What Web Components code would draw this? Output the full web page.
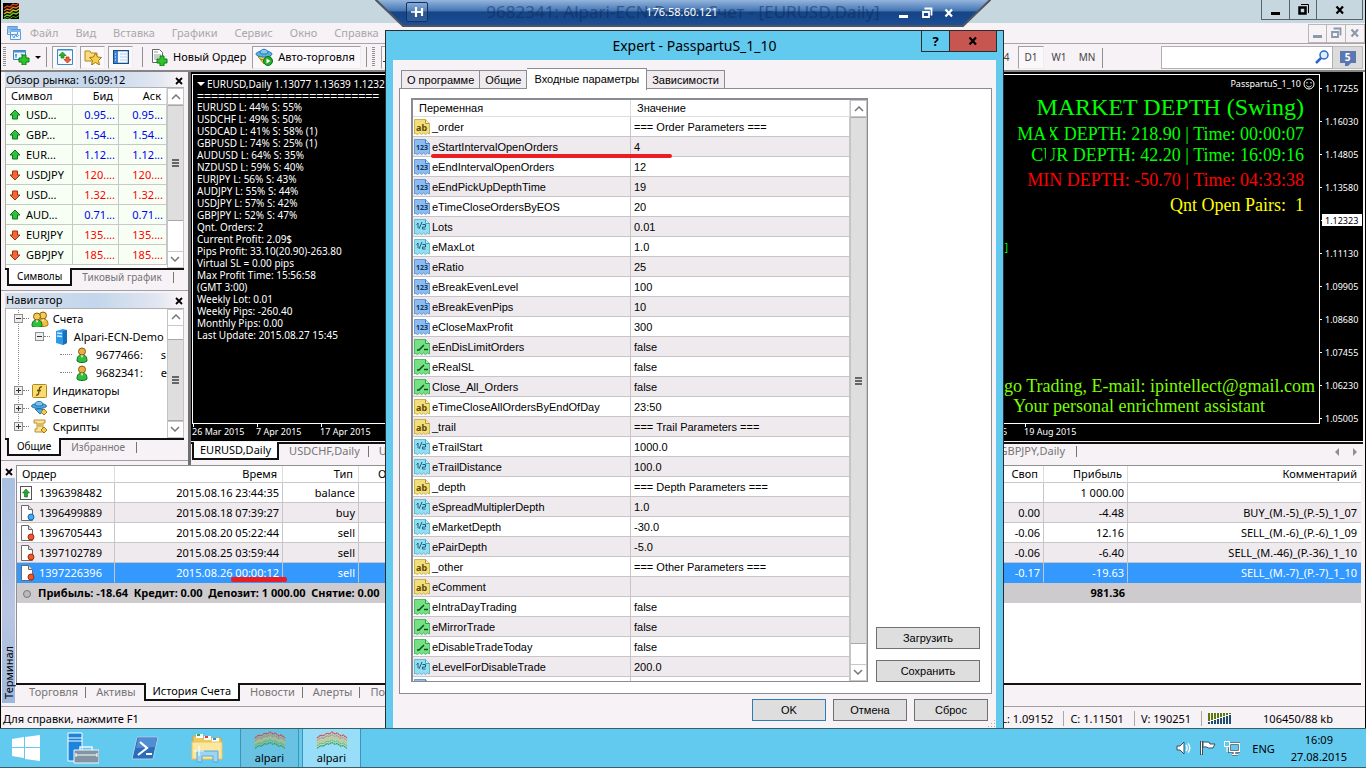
<!DOCTYPE html>
<html lang="ru">
<head>
<meta charset="utf-8">
<title>Alpari-ECN-Demo - [EURUSD,Daily]</title>
<style>
html, body { height: 100%; margin: 0; }
body { overflow: hidden; background: #f7f2f6; }
</style>
</head>
<body>
<remote-desktop></remote-desktop>

<script>
const UI = '"Noto Sans", "Open Sans", sans-serif';
const base = `
  *, *::before, *::after { box-sizing: border-box; }
  button { font: inherit; color: inherit; background: none; border: 0; padding: 0; margin: 0; white-space: nowrap; }
  table { border-collapse: separate; border-spacing: 0; table-layout: fixed; width: 100%; }
  th { font-weight: 400; text-align: left; }
  td, th { padding: 0; overflow: hidden; white-space: nowrap; }
  svg { display: block; }
  .cell { display: flex; align-items: center; height: 19px; }
`;
function define(name, css, html) {
  customElements.define(name, class extends HTMLElement {
    constructor() {
      super();
      const t = document.createElement('template');
      t.innerHTML = `<style>${base}${css}</style>${typeof html === 'function' ? html(this) : html}`;
      this.attachShadow({ mode: 'open' }).append(t.content.cloneNode(true));
    }
  });
}

const person = (x, y, c1, c2, head) => `<g transform="translate(${x} ${y})"><path d="M1 14c0-5 2-6 5-6s5 1 5 6c-2 2-8 2-10 0z" fill="${c1}" stroke="${c2}"/><path d="M4.500 8l1.500 3 1.500-3z" fill="#fff8d0"/><circle cx="6" cy="4.500" r="3.500" fill="${head}" stroke="#8a5a10"/></g>`;
const tile = (c1, c2, inner) => `<path d="M.5.500h11l4 4V15l-2-1-2 1.500-2-1.500-2 1.500-2-1.500-2 1.500-2-1L.5 15z" fill="${c1}" stroke="${c2}" stroke-opacity=".7"/><path d="M11.500.5v4h4" fill="#fff8" stroke="${c2}"/>${inner}`;
const page = '<path d="M1.500.5h7l4 4v11h-11z" fill="#fff" stroke="#6a6a6a"/><path d="M8.500.5v4h4" fill="#ddd" stroke="#6a6a6a"/>';
const zig = (y, c, w = 1.5) => `<path d="M1 ${y + 2}l3-2 3 1 3-3 3 1 3-2" fill="none" stroke="${c}" stroke-width="${w}"/>`;
const peaks = ['#e0402c', '#f07a28', '#e8b82c', '#8fae30', '#3f9a3c'].map((c, i) => `<path d="M1 ${7 + i * 2.6}l4-3 2 1 4-3 2 1 3-2 3 2 2-1 4 3 2-1 4 3" fill="none" stroke="${c}" stroke-width="1.100" stroke-dasharray="2 .5"/>`).join('');
const ICONS = {
  logo: [16, 16, '<path d="M0 0h16v16H0z"/>' + zig(3, '#d8401c') + zig(6, '#e07820') + zig(9, '#c8c020') + zig(12, '#70c820') + '<path d="M1 16l3-1.500 3 1 3-2 3 1 3-2" fill="none" stroke="#50a818"/>'],
  mdi: [16, 16, '<path d="M1.500 1.500h10v8h-10zM4.500 4.500h10v10h-10z" fill="#eef6ff" stroke="#5a9ad8"/><path d="M1 3h11M4 6h11" stroke="#7ab4e8" stroke-width="2"/><path d="M6 10l2 3 2-4 1 3 2-2" fill="none" stroke="#5a9ad8"/><path d="M3 4v4" stroke="#5a9ad8"/>'],
  newchart: [18, 16, '<path d="M1.500 1.500h12v9h-12z" fill="#eaf5ff" stroke="#3c7cb8"/><path d="M1 2.500h13" stroke="#4a90d0" stroke-width="2"/><path d="M4 5v4M3 6h2M9 5l3 2" stroke="#3c7cb8"/><path d="M10 6h4v3h3v4h-3v3h-4v-3H7V9h3z" fill="#2fc42f" stroke="#0e7a10"/>'],
  market: [16, 16, '<path d="M.5.500h15v15H.5z" fill="#f4faff" stroke="#3c8ac8"/><path d="M1 1.500h14" stroke="#8ac4ee"/><path d="M5.500 3L9 6.500H7V9H4V6.500H2z" fill="#2cb42c" stroke="#0e7a10" stroke-width=".7"/><path d="M10.500 14L7 10.500h2V8h3v2.500h2z" fill="#f06030" stroke="#b02c08" stroke-width=".7"/>'],
  star: [18, 16, '<path d="M1 2h5l1 2h6v8H1z" fill="#f8dc80" stroke="#b08820"/><path d="M11.500 4l2 4 4 .5-3 3 1 4.500-4-2.500L7.500 16l1-4.500-3-3 4-.5z" fill="#f6cf4a" stroke="#a87810"/>'],
  termicon: [16, 14, '<path d="M.5.500h15v13H.5z" fill="#f4faff" stroke="#1c4c88" stroke-width="1.500"/><path d="M1 1h4v12H1z" fill="#3a84d8"/><path d="M7 4h7M7 7h7M7 10h7" stroke="#b8cfe6"/><path d="M2 4h1M2 7h1M2 10h1" stroke="#fff"/>'],
  neworder: [17, 17, '<path d="M1.500.5h7l3 3v10h-10z" fill="#fff" stroke="#666"/><path d="M3 3h4M3 6h7M3 8h5M3 10h4" stroke="#999"/><path d="M9 7h4v3h3v4h-3v3H9v-3H6v-4h3z" fill="#2fc42f" stroke="#0e7a10"/>'],
  auto: [18, 18, '<path d="M3 9l2-2h9l2 3-7 4z" fill="#f0d050" stroke="#a88818"/><ellipse cx="9" cy="6" rx="8" ry="3" fill="#5ab0e4" stroke="#2a78b0"/><path d="M5 5c0-5 8-5 8 0-2 1.500-6 1.500-8 0z" fill="#84caf2" stroke="#2a78b0"/><path d="M5 11l4 5 3-3z" fill="#f0d050" stroke="#a88818"/><circle cx="13" cy="13" r="4.500" fill="#22ac2c" stroke="#0c7418"/><path d="M11.500 10.500l4 2.500-4 2.500z" fill="#fff"/>'],
  ohlc: [12, 16, '<path d="M4.500 1v13M1 12.500h3M5 3.500h4" stroke="#333" fill="none"/>'],
  search: [14, 14, '<circle cx="9" cy="5" r="4" fill="#dceeff" stroke="#2c64d0" stroke-width="1.500"/><path d="M6 8l-5 5" stroke="#2c64d0" stroke-width="2.500"/>'],
  up: [12, 12, '<path d="M6 1l5 5H8.500v4h-5V6H1z" fill="#30c040" stroke="#0c7418"/>'],
  down: [12, 12, '<path d="M6 11L1 6h2.500V2h5v4H11z" fill="#f06838" stroke="#a83010"/>'],
  accounts: [18, 16, person(6, 0, '#f0c040', '#a07810', '#f4cc50') + person(0, 1, '#30c040', '#0c7418', '#f4cc50')],
  account: [13, 16, person(0, 0, '#30c040', '#0c7418', '#e8b040')],
  server: [14, 16, '<path d="M2 2l7-2 4 1v13l-4 2-7-2z" fill="#2c9ae8"/><path d="M9 2l4-1v13l-4 2z" fill="#1870b8"/><path d="M3 4l5 .500M3 7l5 .500" stroke="#cfeaff" stroke-width="1.500"/>'],
  func: [15, 14, '<rect x=".5" y=".5" width="14" height="13" rx="1" fill="#f8dc70" stroke="#b08820"/><path d="M10 3c-3-.5-2.500 2-3 4s0 4.500-3 4M5 6.500h4" fill="none" stroke="#6a4a08" stroke-width="1.300"/>'],
  expert: [17, 15, '<path d="M4 8l5 5 4-3-2-2z" fill="#58b0e8" stroke="#2470a8"/><ellipse cx="8" cy="5" rx="7.500" ry="2.500" fill="#4aa8e4" stroke="#2470a8"/><path d="M4 4c0-5 8-5 8 0-2 1.500-6 1.500-8 0z" fill="#7cc4f0" stroke="#2470a8"/><path d="M13 8l3 3-3 3-3-3z" fill="#f4cc50" stroke="#a87810"/>'],
  script: [16, 15, '<path d="M2 1h11v3h-2v6h2v3H3v-3h2V4H2z" fill="#fae29a" stroke="#b89030"/><path d="M6 5h4M6 7h4" stroke="#b89030"/><path d="M12 8l3 3-3 3-3-3z" fill="#f4cc50" stroke="#a87810"/>'],
  ab: [16, 16, tile('#f2df7c', '#b89a28', '<text x="2" y="12" font-family="Noto Sans,sans-serif" font-weight="700" font-size="9" fill="#5c4808">ab</text>')],
  n: [16, 16, tile('#8cbcf0', '#4480c8', '<text x="2" y="11" font-family="Noto Sans,sans-serif" font-weight="700" font-size="7" fill="#10345c">123</text>')],
  v: [16, 16, tile('#94def2', '#40a8c4', '<path d="M2.500 5.500L4 4v5M5 10l3-7M8.500 5.500h3v2.500h-3v2h3" fill="none" stroke="#145c78"/>')],
  b: [16, 16, tile('#74e284', '#2ca044', '<path d="M3 11h2l5-5M10 10.500h4" fill="none" stroke="#0e4c1c" stroke-width="1.500"/>')],
  balance: [14, 14, '<rect x=".5" y=".5" width="11" height="13" fill="#fff" stroke="#555"/><path d="M6 3l3.500 4H7.500v4h-3V7H2.500z" fill="#22ac2c" stroke="#0c6414" stroke-width=".6"/>'],
  buy: [15, 16, page + '<circle cx="11" cy="12" r="3" fill="#3cacf4" stroke="#1468a8"/>'],
  sell: [15, 16, page + '<circle cx="11" cy="12" r="3" fill="#f0562c" stroke="#a02c0c"/>'],
  smile: [12, 12, '<circle cx="6" cy="6" r="5" fill="none" stroke="#fff"/><path d="M4 4v1.500M8 4v1.500M3.500 7.500c1 2 4 2 5 0" fill="none" stroke="#fff"/>'],
  win: [28, 26, '<path d="M0 4l12-2v10H0zM13 2l15-2v12H13zM0 13h12v10L0 21zM13 13h15v13l-15-2z" fill="#fff"/>'],
  srv: [32, 33, '<path d="M1 1h14v28H1z" fill="#1c84dc" stroke="#fff"/><path d="M1 6h14M1 9h14" stroke="#fff"/><path d="M7 18h25v13H7z" fill="#8394a4" stroke="#f2f6f8"/><path d="M13 18v-3h12v3" fill="none" stroke="#f2f6f8" stroke-width="1.500"/><path d="M8 23h22" stroke="#fff"/><path d="M9 21v4M30 21v4" stroke="#fff"/>'],
  ps: [28, 24, '<path d="M6 1h21l-5 22H1z" fill="#2c6cb8" stroke="#a8d0f0"/><path d="M7 2h19l-2 9L5 12z" fill="#6aa4e0" opacity=".6"/><path d="M9 6l7 6-9 7M15 18h6" fill="none" stroke="#fff" stroke-width="2.200"/>'],
  folder: [32, 30, '<path d="M2 3h8l1 2h19v21H2z" fill="#f0c860" stroke="#d8a838"/><path d="M5 1h7v4H5zM13 3h7v4h-7zM21 5h7v4h-7z" fill="#fff"/><path d="M6 1h3v2H6z" fill="#30b040"/><path d="M14 3h3v2h-3z" fill="#e04030"/><path d="M22 5h3v2h-3z" fill="#3090e0"/><path d="M1 9h30v17H1z" fill="#fbe8a0" stroke="#e8c460"/><path d="M6 29V18h21v11h-5v-6H11v6z" fill="#9cd4f4" stroke="#58a8dc"/><path d="M8 13v10M3 18h10" stroke="#fff"/>'],
  alpari: [32, 19, peaks],
  sound: [16, 14, '<path d="M1 5h3l4-4v12L4 9H1z" fill="#fff" stroke="#39515c"/><path d="M10 4c1.500 2 1.500 4 0 6M12 2.500c2.500 3 2.500 6 0 9" fill="none" stroke="#fff" stroke-width="1.300"/>'],
  flag: [16, 16, '<path d="M1.500 1v14" stroke="#39515c" stroke-width="3"/><path d="M3 2h6l1 2h5l-2 4H8L7 7H3z" fill="#fff" stroke="#39515c"/><path d="M1.500 1.500v13" stroke="#fff"/>'],
  net: [16, 16, '<path d="M5.500 3.500h10v8h-10zM8 14.500h6" fill="#63caef" stroke="#39515c" stroke-width="3"/><path d="M5.500 3.500h10v8h-10zM8 14.500h6M10.500 12v2" fill="none" stroke="#fff" stroke-width="1.500"/><rect x=".5" y="1.500" width="5" height="5" fill="#63caef" stroke="#fff"/><path d="M3 7v5" stroke="#fff"/>'],
  bars: [24, 11, Array.from({ length: 8 }, (_, i) => `<path d="M${i * 3 + 1} 0v${8 - i}" stroke="#5a7a10" stroke-width="2"/><path d="M${i * 3 + 1} ${9 - i}V11" stroke="#1c4c70" stroke-width="2"/>`).join('')],
  pin: [13, 10, '<path d="M0 5h5" stroke="#fff" stroke-width="1.500"/><path d="M5 0v10M5 5h6M11 1v8" fill="none" stroke="#fff" stroke-width="2.200"/>'],
  min: [12, 12, '<path d="M1 9.500h9" stroke="currentColor" stroke-width="3"/>'],
  restore: [12, 12, '<path d="M3.500 1.500h7v7M2 5h6v5H2z" fill="none" stroke="currentColor" stroke-width="1.800"/>'],
  max: [12, 12, '<path d="M2.500 3.500h6v6h-6z" fill="none" stroke="currentColor" stroke-width="2.500"/><path d="M4 .500h7.500V9" fill="none" stroke="currentColor"/>'],
  close: [10, 10, '<path d="M1.500 1.500l6.500 7M8 1.500l-6.500 7" stroke="currentColor" stroke-width="2.200"/>'],
  xs: [8, 8, '<path d="M1 1l6 6M7 1L1 7" stroke="currentColor" stroke-width="1.800"/>'],
  chev: [10, 6, '<path d="M1 5l4-4 4 4" fill="none" stroke="#777" stroke-width="1.500"/>'],
};
define('ui-icon', `:host { display: inline-block; flex: none; vertical-align: middle; }`, el => {
  const [w, h, body] = ICONS[el.getAttribute('name')];
  return `<svg width="${w}" height="${h}" viewBox="0 0 ${w} ${h}" aria-hidden="true">${body}</svg>`;
});
const icon = n => `<ui-icon name="${n}"></ui-icon>`;

define('scroll-bar', `
  :host { display: flex; flex-direction: column; width: 17px; flex: none; background: #fff; border: 1px solid #c4c4c4; border-width: 0 1px; }
  button { height: 17px; border: 1px solid #c8c8c8; border-width: 1px 0; display: grid; place-items: center; }
  button:last-child { transform: rotate(180deg); }
  .a { flex: none; height: var(--before, 0px); } .b { flex: none; height: var(--after, 0px); }
  .thumb { flex: 1; background: #dedede; border: 1px solid #a8a8a8; border-width: 1px 0; display: grid; place-items: center; }
  i { width: 7px; height: 8px; background: repeating-linear-gradient(#666 0 2px, #dedede 2px 3px); }
`, `<button aria-label="Вверх">${icon('chev')}</button><div class="a"></div><div class="thumb"><i></i></div><div class="b"></div><button aria-label="Вниз">${icon('chev')}</button>`);

define('tab-strip', `
  :host { display: flex; height: 18px; flex: none; font: var(--tab-size, 11px)/14px ${UI}; color: #757575; overflow: hidden; }
  .lead, .rest, .tab { border-top: 2px solid #111; }
  .lead { width: var(--lead, 2px); flex: none; } .rest { flex: 1; }
  .tab { position: relative; padding: 0 var(--pr, 8px) 2px var(--pl, 10px); flex: none; }
  .tab::after { content: ""; position: absolute; right: 0; top: 2px; height: 11px; border-right: 1px solid #757575; }
  .tab.pre::after { display: none; }
  .on { background: #fff; color: #000; border: 2px solid #111; border-top: 0; padding: 0 var(--pa, 6px); }
  .on::after { display: none; }
`, el => {
  const on = +el.getAttribute('active') || 0;
  return `<div class="lead"></div>` + el.getAttribute('tabs').split('|').map((t, i) => `<button class="tab ${i === on ? 'on' : ''} ${i === on - 1 ? 'pre' : ''}">${t}</button>`).join('') + `<div class="rest"></div>`;
});

define('dock-panel', `
  :host { display: flex; flex-direction: column; min-height: 0; padding: 0 4px 0 4px; border-bottom: 1px solid #a0a0a0; }
  header { flex: none; height: 15px; display: flex; align-items: center; justify-content: space-between; padding: 0 3px 0 1px; margin-right: -2px; font: 11px/14px ${UI}; background: linear-gradient(90deg, #d5dfec, #c3d6ec 50%, #e2e7f1 85%, #f7f2f6 95%); }
  .body { flex: 1; min-height: 0; display: flex; border: 1px solid #b0b0b0; border-width: 1px 0 0 1px; background: #fff; overflow: hidden; }
  slot { display: block; flex: 1; min-width: 0; }
  .pad { height: 4px; flex: none; }
  tab-strip { --tab-size: 10px; --pl: 10px; --pr: 12px; --pa: 8px; }
`, el => `<header><span>${el.getAttribute('heading')}</span><button aria-label="Закрыть">${icon('xs')}</button></header>
  <div class="body"><slot></slot><scroll-bar></scroll-bar></div>
  <tab-strip tabs="${el.getAttribute('tabs')}"></tab-strip><div class="pad"></div>`);

const quotes = [['u', 'USD...', '0.95...'], ['u', 'GBP...', '1.54...'], ['u', 'EUR...', '1.12...'], ['d', 'USDJPY', '120....'], ['d', 'USD...', '1.32...'], ['u', 'AUD...', '0.71...'], ['d', 'EURJPY', '135....'], ['d', 'GBPJPY', '185....']];
define('market-watch', `
  :host { display: block; font: 11px/16px ${UI}; }
  th { height: 17px; border-right: 1px solid #ddd; border-bottom: 1px solid #c8c8c8; background: #fff; padding: 0 5px; }
  td { height: 20px; line-height: 19px; border-right: 1px solid #c8c8c8; border-bottom: 1px solid #c8c8c8; background: #f7fff5; padding: 0 3px; }
  .r { text-align: right; }
  .u { color: #0000f0; } .d { color: #f00; }
  .cell { gap: 5px; }
`, `<table><colgroup><col><col width="46"><col width="48"></colgroup><tr><th>Символ</th><th class="r">Бид</th><th class="r">Аск</th></tr>
  ${quotes.map(([d, s, p]) => `<tr><td><div class="cell">${icon(d === 'u' ? 'up' : 'down')}<span>${s}</span></div></td><td class="r ${d}">${p}</td><td class="r ${d}">${p}</td></tr>`).join('')}</table>`);

define('tree-node', `
  :host { display: flex; align-items: center; height: 18px; font: 11px/18px ${UI}; white-space: nowrap; padding-left: var(--indent, 8px); }
  i { flex: none; width: 9px; height: 9px; border: 1px solid #909090; background: #eee; position: relative; }
  i::before, i.plus::after { content: ""; position: absolute; left: 1px; top: 3px; width: 5px; height: 1px; background: #333; }
  i.plus::after { transform: rotate(90deg); }
  .dots { flex: none; width: 6px; border-top: 1px dotted #808080; }
  .leaf { width: 12px; }
  .ic { flex: none; width: 21px; display: flex; justify-content: center; }
`, el => {
  const m = el.getAttribute('mark');
  return `${m ? `<i class="${m}"></i>` : ''}<span class="dots ${m ? '' : 'leaf'}"></span><span class="ic">${icon(el.getAttribute('icon'))}</span><slot></slot>`;
});
define('nav-tree', `
  :host { display: block; padding-top: 1px; }
  .root { background: repeating-linear-gradient(#909090 0 1px, transparent 1px 2px) 12px 0 / 1px 118px no-repeat; }
  .b { --indent: 29px; } .c { --indent: 54px; }
  .gap { padding-left: 18px; }
`, `<div class="root"><tree-node mark="minus" icon="accounts">&nbsp;Счета</tree-node>
  <tree-node class="b" mark="minus" icon="server">&nbsp;Alpari-ECN-Demo</tree-node>
  <tree-node class="c" icon="account">&nbsp;9677466:<span class="gap">s</span></tree-node>
  <tree-node class="c" icon="account">&nbsp;9682341:<span class="gap">e</span></tree-node>
  <tree-node mark="plus" icon="func">&nbsp;Индикаторы</tree-node>
  <tree-node mark="plus" icon="expert">&nbsp;Советники</tree-node>
  <tree-node mark="plus" icon="script">&nbsp;Скрипты</tree-node></div>`);

const log = ['EURUSD L: 44% S: 55%', 'USDCHF L: 49% S: 50%', 'USDCAD L: 41% S: 58% (1)', 'GBPUSD L: 74% S: 25% (1)', 'AUDUSD L: 64% S: 35%', 'NZDUSD L: 59% S: 40%', 'EURJPY L: 56% S: 43%', 'AUDJPY L: 55% S: 44%', 'USDJPY L: 57% S: 42%', 'GBPJPY L: 52% S: 47%', 'Qnt. Orders: 2', 'Current Profit: 2.09$', 'Pips Profit: 33.10(20.90)-263.80', 'Virtual SL = 0.00 pips', 'Max Profit Time: 15:56:58', '(GMT 3:00)', 'Weekly Lot: 0.01', 'Weekly Pips: -260.40', 'Monthly Pips: 0.00', 'Last Update: 2015.08.27 15:45'];
// Empty entries keep the 64px step of the time axis without a label.
const dates = ['26 Mar 2015', '7 Apr 2015', '17 Apr 2015', '', '', '', '', '', '', '', '', '', '7 Aug 2015', '19 Aug 2015'];
const prices = ['1.17255', '1.16030', '1.14805', '1.13580', '1.12323', '1.11130', '1.09905', '1.08680', '1.07455', '1.06230', '1.05005'];
define('price-chart', `
  :host { display: grid; grid-template: 1fr 17px / 1fr 43px; background: #000; color: #fff; font: 10px/12px ${UI}; padding-top: 2px; min-height: 0; }
  .plot { border: 1px solid #fff; position: relative; padding: 2px 15px 0 4px; display: flex; justify-content: space-between; min-height: 0; overflow: hidden; }
  .head { line-height: 14px; white-space: pre; }
  .head::before { content: ""; display: inline-block; border: 4px solid transparent; border-top-color: #fff; border-bottom: 0; margin: 0 2px 2px 0; }
  .rule { font: 12px/10px "Liberation Sans", sans-serif; }
  .log div { white-space: nowrap; }
  .info { font-family: "Liberation Serif", serif; text-align: right; white-space: nowrap; color: #0f0; font-size: 18px; line-height: 21px; }
  .name { font: 9px/14px ${UI}; color: #fff; display: flex; justify-content: flex-end; gap: 2px; margin-right: -11px; align-items: center; }
  .big { font-size: 24px; line-height: 33px; }
  .slit { position: absolute; right: 269px; top: 50px; width: 4px; height: 42px; background: #000; }
  .red { color: #f00; line-height: 28px; } .yel { color: #ff0; line-height: 22px; }
  .foot { position: absolute; right: 4px; bottom: 7px; font: 18px/20px "Liberation Serif", serif; color: #7cfc00; text-align: right; white-space: nowrap; }
  .foot p { margin: 0; } .foot p + p { padding-right: 50px; }
  .mark { position: absolute; right: 311px; top: 166px; color: #0f0; }
  .prices { display: flex; flex-direction: column; gap: 21px; padding-top: 8px; font-size: 9px; }
  .prices span { padding-left: 5px; position: relative; line-height: 13px; height: 12px; }
  .prices span::before { content: ""; position: absolute; left: -1px; top: 6px; width: 3px; border-top: 1px solid #fff; }
  .prices .now { background: #fff; color: #000; margin: 0 1px 0 2px; padding-left: 3px; }
  .times { display: flex; font-size: 9px; line-height: 15px; overflow: hidden; }
  .times span { flex: none; width: 64px; white-space: nowrap; position: relative; }
  .times span::before { content: ""; position: absolute; left: 1px; top: 0; height: 3px; border-left: 1px solid #fff; }
`, `<div class="plot"><div class="log"><div class="head">EURUSD,Daily  1.13077 1.13639 1.12320</div><div class="rule">==========================</div>${log.map(l => `<div>${l}</div>`).join('')}</div>
  <div class="info"><div class="name">PasspartuS_1_10 ${icon('smile')}</div><div class="big">MARKET DEPTH (Swing)</div><div>MAX DEPTH: 218.90 | Time: 00:00:07</div><div>CUR DEPTH: 42.20 | Time: 16:09:16</div><div class="red">MIN DEPTH: -50.70 | Time: 04:33:38</div><div class="yel">Qnt Open Pairs:&nbsp; 1</div></div>
  <div class="slit"></div><div class="mark">]</div>
  <div class="foot"><p>Algo Trading, E-mail: ipintellect@gmail.com</p><p>Your personal enrichment assistant</p></div></div>
  <div class="prices">${prices.map((p, i) => `<span class="${i === 4 ? 'now' : ''}">${p}</span>`).join('')}</div>
  <div class="times">${dates.map(d => `<span>${d}</span>`).join('')}</div>`);

define('chart-window', `
  :host { display: flex; flex-direction: column; min-width: 0; border-left: 3px solid #6f6f6f; margin-right: 2px; }
  price-chart { flex: 1; border-left: 1px solid #000; }
  .tabs { display: flex; position: relative; margin-top: 1px; }
  tab-strip { flex: 1; --lead: 1px; --pr: 9px; }
  .tabs svg { position: absolute; right: 6px; top: 6px; }
  .end { height: 6px; border-bottom: 1px solid #b8b8b8; }
  .last { position: absolute; right: 286px; top: 2px; font: 11px/14px ${UI}; color: #757575; padding-right: 12px; }
  .last::after { content: ""; position: absolute; right: 0; top: 2px; height: 11px; border-right: 1px solid #757575; }
`, `<price-chart></price-chart><div class="tabs"><tab-strip tabs="EURUSD,Daily|USDCHF,Daily|USDCAD,Daily"></tab-strip><button class="last">GBPJPY,Daily</button>
  <svg width="22" height="8" viewBox="0 0 22 8"><path d="M4 0v8L0 4zM18 0v8l4-4z" fill="#909090"/></svg></div><div class="end"></div>`);

const orders = [['balance', '1396398482', '2015.08.16 23:44:35', 'balance', '', '1 000.00', ''], ['buy', '1396499889', '2015.08.18 07:39:27', 'buy', '0.00', '-4.48', 'BUY_(M.-5)_(P.-5)_1_07'], ['sell', '1396705443', '2015.08.20 05:22:44', 'sell', '-0.06', '12.16', 'SELL_(M.-6)_(P.-6)_1_09'], ['sell', '1397102789', '2015.08.25 03:59:44', 'sell', '-0.06', '-6.40', 'SELL_(M.-46)_(P.-36)_1_10'], ['sell', '1397226396', '2015.08.26 00:00:12', 'sell', '-0.17', '-19.63', 'SELL_(M.-7)_(P.-7)_1_10']];
define('terminal-panel', `
  :host { display: flex; flex: none; height: 243px; font: 11px/19px ${UI}; border-bottom: 1px solid #a0a0a0; padding: 1px 4px 0 1px; }
  aside { width: 14px; flex: none; display: flex; flex-direction: column; }
  aside button { height: 13px; display: grid; place-items: center; }
  .strip { flex: 1; margin: 0 1px 3px 0; background: linear-gradient(#9db8dc, #b8c6e2 40%, #a9c0e0); writing-mode: vertical-rl; transform: rotate(180deg); line-height: 13px; padding-top: 4px; }
  main { flex: 1; min-width: 0; display: flex; flex-direction: column; padding-bottom: 5px; }
  .grid { flex: 1; background: #fff; border-top: 1px solid #909090; border-left: 1px solid #909090; }
  th { height: 17px; line-height: 16px; border-right: 1px solid #ddd; border-bottom: 1px solid #c8c8c8; padding: 0 5px; text-align: right; }
  td { height: 20px; border-right: 1px solid #c8c4c8; border-bottom: 1px solid #c8c4c8; padding: 0 3px; text-align: right; position: relative; }
  th:last-child, td:last-child { padding-right: 4px; border-right: 0; }
  th:first-child, td:first-child { text-align: left; }
  td:first-child { padding-left: 3px; }
  .cell { gap: 4px; }
  .cell ui-icon { width: 15px; }
  .vol { text-align: left; padding-left: 19px; }
  tr:nth-child(odd) td { background: #efeaee; }
  tr.sel td { background: #3399ff; color: #fff; border-bottom-color: #3399ff; }
  tr.sum td { background: #cecbce; font-weight: 700; border: 0; line-height: 18px; }
  tr.sum td:first-child { padding-left: 6px; }
  tr.sum i { display: inline-block; width: 8px; height: 8px; border: 1px solid #777; border-radius: 4px; background: #bbb; margin-right: 7px; vertical-align: middle; }
  .line { position: absolute; right: -5px; bottom: 0; width: 56px; height: 5px; border-radius: 2px; background: #ec1c24; }
  td.over { overflow: visible; z-index: 1; }
  tab-strip { --lead: 3px; --pa: 7px; }
`, `<aside><button aria-label="Закрыть">${icon('xs')}</button><div class="strip">Терминал</div></aside>
  <main><div class="grid"><table><colgroup><col width="98"><col width="168"><col width="76"><col><col width="60"><col width="84"><col width="233"></colgroup>
  <tr><th>Ордер</th><th>Время</th><th>Тип</th><th class="vol">Объем</th><th>Своп</th><th>Прибыль</th><th>Комментарий</th></tr>
  ${orders.map((o, i) => `<tr class="${i === 4 ? 'sel' : ''}"><td><div class="cell">${icon(o[0])}<span>${o[1]}</span></div></td><td class="${i === 4 ? 'over' : ''}">${o[2]}${i === 4 ? '<div class="line"></div>' : ''}</td><td>${o[3]}</td><td></td><td>${o[4]}</td><td>${o[5]}</td><td>${o[6]}</td></tr>`).join('')}
  <tr class="sum"><td colspan="5"><i></i>Прибыль: -18.64&nbsp; Кредит: 0.00&nbsp; Депозит: 1 000.00&nbsp; Снятие: 0.00</td><td>981.36</td><td></td></tr></table></div>
  <tab-strip tabs="Торговля|Активы|История Счета|Новости|Алерты|Почта" active="2"></tab-strip></main>`);

define('status-bar', `
  :host { display: flex; align-items: center; flex: none; height: 21px; padding: 2px 32px 0 2px; font: 11px/18px ${UI}; }
  .msg { flex: 1; } span { padding: 0 10px 0 6px; border-right: 1px solid #a8a8a8; line-height: 15px; }
  ui-icon { margin: 0 31px 0 6px; }
`, `<div class="msg">Для справки, нажмите F1</div><span>L: 1.09152</span><span>C: 1.11501</span><span>V: 190251</span>${icon('bars')}<div>106450/88 kb</div>`);

define('task-bar', `
  :host { display: flex; flex: none; height: 40px; background: #63caef; border: 1px solid #3c5c68; border-width: 1px 0; font: 12px/17px ${UI}; }
  button { width: 62px; display: grid; place-items: center; flex: none; }
  .run { width: 59px; border: 1px solid #3f93b4; border-width: 0 1px; background: #68c2e4; font-size: 11px; line-height: 15px; padding-top: 2px; margin-right: 3px; align-content: start; }
  .on { background: #98def8; }
  .tray { margin-left: auto; display: flex; align-items: center; gap: 8px; padding-right: 19px; }
  .lang { margin: 0 8px 0 4px; font-size: 11px; } .clock { text-align: center; font-size: 11px; }
  .first { width: 52px; }
  .run:first-of-type { margin-left: 1px; }
  .apps { display: flex; padding-left: 1px; }
`, `<button class="first" aria-label="Пуск">${icon('win')}</button><button aria-label="Диспетчер серверов">${icon('srv')}</button><button aria-label="PowerShell">${icon('ps')}</button><button aria-label="Проводник">${icon('folder')}</button>
  <div class="apps"><button class="run">${icon('alpari')}alpari</button><button class="run on">${icon('alpari')}alpari</button></div>
  <div class="tray">${icon('sound')}${icon('flag')}${icon('net')}<span class="lang">ENG</span><div class="clock">16:09<br>27.08.2015</div></div>`);

define('app-titlebar', `
  :host { display: flex; flex: none; height: 23px; background: #c6d7df; padding: 3px 2px 0 2px; justify-content: space-between; align-items: flex-start; }
  nav { display: flex; margin-top: -3px; border: 1px solid #5a6468; border-top: 0; height: 20px; }
  nav button { width: 27px; display: grid; place-items: center; border-left: 1px solid #5a6468; }
  nav button:first-child { border: 0; } nav button:last-child { width: 46px; }
`, `${icon('logo')}<nav><button aria-label="Свернуть">${icon('min')}</button><button aria-label="Развернуть">${icon('max')}</button><button aria-label="Закрыть">${icon('close')}</button></nav>`);

define('app-menubar', `
  :host { display: flex; flex: none; height: 21px; align-items: center; border-bottom: 1px solid #a8a4a8; font: 11px/18px ${UI}; color: #a8a8a8; padding: 0 0 0 5px; }
  .m { margin-left: 17px; } ui-icon + .m { margin-left: 8px; }
  .w { width: 19px; height: 19px; border: 1px solid #b8b8b8; display: grid; place-items: center; color: #8a9aac; border-left-width: 0; } .x { margin-left: auto; border-left-width: 1px; }
`, `${icon('mdi')}${['Файл', 'Вид', 'Вставка', 'Графики', 'Сервис', 'Окно', 'Справка'].map(t => `<button class="m">${t}</button>`).join('')}
  <button class="w x" aria-label="Свернуть окно">${icon('min')}</button><button class="w" aria-label="Восстановить окно">${icon('restore')}</button><button class="w" aria-label="Закрыть окно">${icon('close')}</button>`);

define('app-toolbar', `
  :host { display: flex; flex: none; height: 28px; align-items: center; border-bottom: 2px solid #858585; font: 11px/20px ${UI}; padding: 0 2px; }
  .grip { width: 3px; height: 20px; background: repeating-linear-gradient(#909090 0 1px, transparent 1px 2px); margin-right: 6px; flex: none; }
  .sep { width: 1px; height: 20px; background: #909090; margin: 0 5px; flex: none; }
  .wide { margin: 0 8px 0 6px; }
  button { display: flex; align-items: center; justify-content: center; height: 23px; gap: 5px; }
  .on { border: 1px solid #a0a0a0; border-right-color: #eee; border-bottom-color: #eee; background: #faf8fa; }
  .sq { width: 25px; margin-right: 3px; }
  .dd::after { content: ""; border: 3px solid transparent; border-top-color: #000; border-bottom: 0; }
  .auto { padding: 0 5px 0 2px; margin-left: 6px; }
  .tf { margin-left: auto; display: flex; color: #444; font-size: 10px; } .tf button { width: 26px; margin-right: 2px; }
  .tf .sep { margin: 2px 0 0; }
  label { display: flex; align-items: center; width: 172px; height: 23px; background: #fff; border: 1px solid #b0b0b0; margin-left: 58px; padding-right: 3px; }
  input { flex: 1; min-width: 0; border: 0; outline: 0; background: none; font: inherit; }
  .msg { width: 30px; background: #dcdcdc; border: 1px solid #bbb; border-left: 0; }
  .msg b { background: #5b78b0; color: #fff; font: 700 10px/12px ${UI}; width: 16px; height: 12px; position: relative; }
  .msg b::after { content: ""; position: absolute; left: 5px; top: 12px; border: 3px solid transparent; border-top-color: #5b78b0; border-left-color: #5b78b0; border-bottom: 0; }
`, `<div class="grip"></div><button class="dd" aria-label="Новый график">${icon('newchart')}</button><div class="sep"></div>
  <button class="on sq" aria-label="Обзор рынка">${icon('market')}</button><button class="on sq" aria-label="Навигатор">${icon('star')}</button><button class="on sq" aria-label="Терминал">${icon('termicon')}</button><div class="sep wide"></div>
  <button>${icon('neworder')}Новый Ордер</button><button class="on auto">${icon('auto')}Авто-торговля</button><div class="sep"></div><div class="grip"></div><button class="on" aria-label="Бары">${icon('ohlc')}</button>
  <div class="tf"><button>H4</button><button class="on">D1</button><button>W1</button><button>MN</button><div class="sep"></div></div>
  <label><input type="search" aria-label="Поиск">${icon('search')}</label><button class="msg" aria-label="Сообщения"><b>5</b></button>`);

define('rdp-bar', `
  :host { display: block; position: absolute; left: 50%; top: 0; width: 616px; height: 27px; transform: translateX(-50%); color: #fff; }
  .bg { position: absolute; inset: 0; }
  .ghost { position: absolute; left: 0; right: 0; text-align: center; font: 17px/23px ${UI}; color: #0c2a58; opacity: .5; white-space: nowrap; }
  .bar { position: relative; display: flex; align-items: center; height: 24px; padding: 0 37px 0 31px; }
  .pin { width: 22px; height: 20px; border: 1px solid #14305c; border-radius: 2px; background: #ffffff18; display: grid; place-items: center; }
  .ip { flex: 1; text-align: center; font: 11px/24px ${UI}; padding-left: 38px; }
  nav { display: flex; gap: 11px; }
`, `<svg class="bg" width="616" height="27" viewBox="0 0 616 27"><defs><linearGradient id="g" x2="0" y2="1"><stop stop-color="#9bbbe0"/><stop offset=".44" stop-color="#4475b4"/><stop offset=".48" stop-color="#164484"/><stop offset="1" stop-color="#1c4f98"/></linearGradient></defs><path d="M0-1l28 27h560l28-27z" fill="url(#g)" stroke="#50545c" stroke-width="2"/></svg>
  <div class="ghost">9682341: Alpari-ECN-Demo Счет - [EURUSD,Daily]</div>
  <div class="bar"><button class="pin" aria-label="Закрепить">${icon('pin')}</button><div class="ip">176.58.60.121</div><nav><button aria-label="Свернуть">${icon('min')}</button><button aria-label="Восстановить">${icon('restore')}</button><button aria-label="Закрыть">${icon('close')}</button></nav></div>`);

const params = [['ab', '_order', '=== Order Parameters ==='], ['n', 'eStartIntervalOpenOrders', '4'], ['n', 'eEndIntervalOpenOrders', '12'], ['n', 'eEndPickUpDepthTime', '19'], ['n', 'eTimeCloseOrdersByEOS', '20'], ['v', 'Lots', '0.01'], ['v', 'eMaxLot', '1.0'], ['n', 'eRatio', '25'], ['n', 'eBreakEvenLevel', '100'], ['n', 'eBreakEvenPips', '10'], ['n', 'eCloseMaxProfit', '300'], ['b', 'eEnDisLimitOrders', 'false'], ['b', 'eRealSL', 'false'], ['b', 'Close_All_Orders', 'false'], ['ab', 'eTimeCloseAllOrdersByEndOfDay', '23:50'], ['ab', '_trail', '=== Trail Parameters ==='], ['v', 'eTrailStart', '1000.0'], ['v', 'eTrailDistance', '100.0'], ['ab', '_depth', '=== Depth Parameters ==='], ['v', 'eSpreadMultiplerDepth', '1.0'], ['v', 'eMarketDepth', '-30.0'], ['v', 'ePairDepth', '-5.0'], ['ab', '_other', '=== Other Parameters ==='], ['ab', 'eComment', ''], ['b', 'eIntraDayTrading', 'false'], ['b', 'eMirrorTrade', 'false'], ['b', 'eDisableTradeToday', 'false'], ['v', 'eLevelForDisableTrade', '200.0'], ['n', '', '']];
define('param-table', `
  :host { display: flex; background: #fff; border: 2px solid #8a8c92; border-right-width: 1px; border-bottom-width: 1px; overflow: hidden; }
  .list { flex: 1; min-width: 0; overflow: hidden; }
  th { height: 17px; line-height: 16px; padding-left: 6px; border-right: 1px solid #ddd; border-bottom: 1px solid #ddd; }
  td { height: 20px; line-height: 17px; border-bottom: 1px solid #c8c4c8; border-right: 1px solid #c8c4c8; padding: 2px 0 0 3px; }
  td:first-child { padding: 0 0 0 1px; position: relative; }
  tr:nth-child(odd) td { background: #efeaee; }
  .cell { gap: 2px; } .cell span { padding-top: 2px; }
  td.mark { overflow: visible; }
  .line { position: absolute; left: 18px; bottom: -2px; width: 241px; height: 4px; border-radius: 2px; background: #ec1c24; z-index: 1; }
  scroll-bar { --after: 20px; }
`, `<div class="list"><table><colgroup><col><col width="219"></colgroup><tr><th>Переменная</th><th>Значение</th></tr>
  ${params.map((p, i) => `<tr><td class="${i === 1 ? 'mark' : ''}"><div class="cell">${icon(p[0])}<span>${p[1]}</span></div>${i === 1 ? '<div class="line"></div>' : ''}</td><td>${p[2]}</td></tr>`).join('')}</table></div><scroll-bar></scroll-bar>`);

define('expert-dialog', `
  :host { position: absolute; left: calc(50% - 298px); top: 30px; bottom: 40px; width: 619px; display: flex; flex-direction: column; background: #63caef; border: 1px solid #2c2c2c; border-bottom: 0; font: 11px/18px "Liberation Sans", sans-serif; padding: 0 7px; }
  header { height: 29px; flex: none; position: relative; text-align: center; font: 14px/30px ${UI}; }
  .win { position: absolute; right: -1px; top: 0; display: flex; }
  .win button { height: 21px; width: 29px; border: 1px solid #2c2c2c; border-top: 0; font: 700 13px/18px ${UI}; display: grid; place-items: center; }
  .win .x { width: 47px; background: #c75651; border-left: 0; }
  .client { flex: 1; min-height: 0; background: #f7f2f6; padding: 8px 4px 0 6px; display: flex; flex-direction: column; }
  .tabs { display: flex; align-items: flex-end; height: 21px; flex: none; padding-left: 2px; margin-bottom: -1px; position: relative; }
  .tabs button { height: 19px; padding: 0 5px; background: #efebee; border: 1px solid #8a8c92; border-left-width: 0; }
  .tabs button:first-child { border-left-width: 1px; }
  .tabs .on { height: 22px; margin-bottom: -1px; background: #fff; border-bottom: 0; padding: 0 7px 2px 7px; }
  .page { flex: 1; min-height: 0; background: #fff; border: 1px solid #8a8c92; display: flex; padding: 9px 11px 11px 11px; gap: 8px; }
  param-table { flex: 1; }
  .side { width: 104px; display: flex; flex-direction: column; justify-content: flex-end; gap: 11px; }
  .btn { height: 22px; background: #dfdedf; border: 1px solid #707070; }
  .foot { flex: none; display: flex; justify-content: flex-end; gap: 7px; padding: 5px 4px 7px 0; position: relative; }
  .foot::after { content: ""; position: absolute; right: -3px; bottom: 1px; width: 8px; height: 8px; background: radial-gradient(#b0acb0 1px, transparent 1px) 0 0 / 3px 3px; clip-path: polygon(100% 0, 100% 100%, 0 100%); }
  .foot .btn { width: 74px; } .foot .ok { border-color: #2c7cb8; }
`, `<header>Expert - PasspartuS_1_10<div class="win"><button aria-label="Справка">?</button><button class="x" aria-label="Закрыть">${icon('close')}</button></div></header>
  <div class="client"><div class="tabs"><button>О программе</button><button>Общие</button><button class="on">Входные параметры</button><button>Зависимости</button></div>
  <div class="page"><param-table></param-table><div class="side"><button class="btn">Загрузить</button><button class="btn">Сохранить</button></div></div>
  <div class="foot"><button class="btn ok">OK</button><button class="btn">Отмена</button><button class="btn">Сброс</button></div></div>`);

define('remote-desktop', `
  :host { display: flex; flex-direction: column; height: 100vh; position: relative; background: #f7f2f6; overflow: hidden; color: #000; }
  .app { flex: 1; min-height: 0; display: flex; flex-direction: column; border: 1px solid #000; border-width: 0 1px; }
  .mid { flex: 1; min-height: 0; display: grid; grid-template-columns: 187px 1fr; }
  .left { display: flex; flex-direction: column; min-height: 0; padding-bottom: 5px; }
  .mw { flex: 219 1 0; --after: 30px; } .nav { flex: 168 1 0; --before: 13px; padding-top: 2px; }
`, `<div class="app"><app-titlebar></app-titlebar><app-menubar></app-menubar><app-toolbar></app-toolbar>
  <div class="mid"><div class="left"><dock-panel class="mw" heading="Обзор рынка: 16:09:12" tabs="Символы|Тиковый график"><market-watch></market-watch></dock-panel>
  <dock-panel class="nav" heading="Навигатор" tabs="Общие|Избранное"><nav-tree></nav-tree></dock-panel></div><chart-window></chart-window></div>
  <terminal-panel></terminal-panel><status-bar></status-bar></div><task-bar></task-bar><expert-dialog></expert-dialog><rdp-bar></rdp-bar>`);
</script>
</body>
</html>
